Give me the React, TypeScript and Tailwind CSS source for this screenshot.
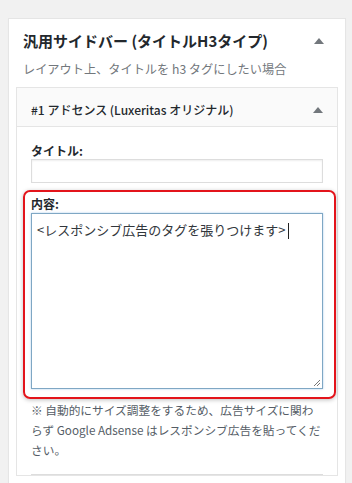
import React from "react";

const Arrow = () => (
  <svg width="10" height="6" viewBox="0 0 10 6" className="shrink-0">
    <path d="M5 0 L10 6 L0 6 Z" fill="#72777c" />
  </svg>
);

export default function App() {
  const jp = { fontFamily: '"Noto Sans CJK JP", "Noto Sans", sans-serif' };
  return (
    <div className="h-[483px] overflow-hidden bg-[#f1f1f1] pt-[18px] pl-[8px] pr-[6px]" style={jp}>
      <div className="border border-[#e5e5e5] bg-white shadow-[0_1px_1px_rgba(0,0,0,0.04)] px-[7px] pb-4 h-[500px]">
        <div className="flex items-center justify-between pl-[7px] pr-[14px] pt-[11px]">
          <h3 className="text-[15px] font-bold leading-[22px] text-[#23282d]">汎用サイドバー (タイトルH3タイプ)</h3>
          <Arrow />
        </div>
        <p className="pl-[7px] mt-[8px] text-[12.2px] leading-[18px] text-[#72777c]">レイアウト上、タイトルを h3 タグにしたい場合</p>

        <div className="mt-[9px] border border-[#e5e5e5] bg-white">
          <div className="flex items-center justify-between h-[39px] pt-[5px] bg-[#fafafa] border-b border-[#e5e5e5] pl-[14px] pr-[14px]">
            <span className="text-[12px] font-medium text-[#23282d]">#1 アドセンス (Luxeritas オリジナル)</span>
            <Arrow />
          </div>
          <div className="px-[14px] pt-[16px]">
            <label className="block text-[12px] font-bold leading-[16px] text-[#23282d]">タイトル:</label>
            <div className="h-[24px] border border-[#ddd] bg-white shadow-[inset_0_1px_2px_rgba(0,0,0,0.07)]" />

            <div className="mt-[7px] ml-[-8px] mr-[-13px] rounded-[7px] border-2 border-[#e3141b] pl-[6px] pr-[11px] pt-[3px] pb-[8px] shadow-[0_1px_4px_rgba(0,0,0,0.25)]">
              <label className="block text-[12px] font-bold leading-[18px] text-[#23282d]">内容:</label>
              <div className="relative h-[176px] border border-[#7fa7c4] bg-white px-[5px] pt-[2px] shadow-[0_0_2px_rgba(91,157,217,0.5)]">
                <span className="text-[13px] leading-[20px] text-[#32373c]">&lt;レスポンシブ広告のタグを張りつけます&gt;</span>
                <span className="inline-block align-middle ml-[2px] w-px h-[16px] bg-[#222]" />
                <svg className="absolute right-[1px] bottom-[1px]" width="9" height="9" viewBox="0 0 9 9">
                  <path d="M8 2 L2 8 M8 5 L5 8" stroke="#777" strokeWidth="1" />
                </svg>
              </div>
            </div>

            <p className="mt-[1px] text-[11.7px] leading-[20px] text-[#555d66]">
              ※ 自動的にサイズ調整をするため、広告サイズに関わらず Google Adsense はレスポンシブ広告を貼ってください。
            </p>
            <div className="mt-[14px] border-t border-[#ddd]" />
          </div>
        </div>
      </div>
    </div>
  );
}
